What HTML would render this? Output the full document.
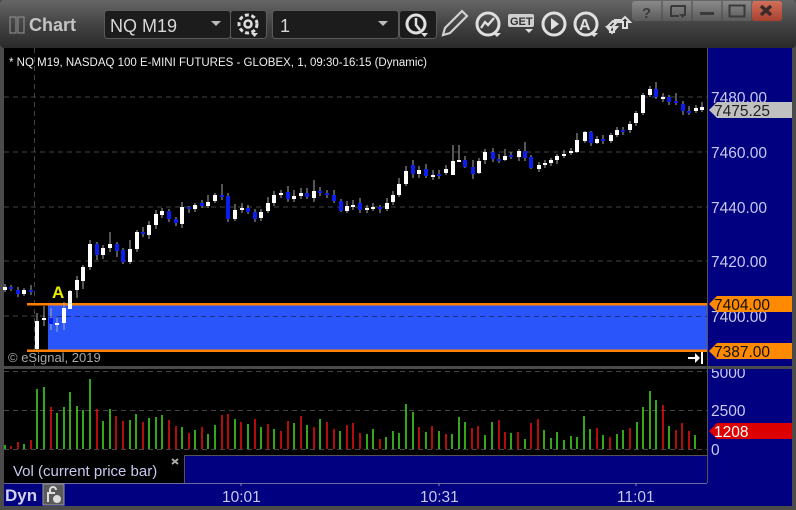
<!DOCTYPE html>
<html><head><meta charset="utf-8"><style>
html,body{margin:0;padding:0;background:#4a4a4a;}
body{width:796px;height:510px;overflow:hidden;position:relative;font-family:"Liberation Sans",sans-serif;}
</style></head><body>
<svg width="796" height="510" viewBox="0 0 796 510" xmlns="http://www.w3.org/2000/svg" style="position:absolute;left:0;top:0" font-family="Liberation Sans, sans-serif">
<defs>
<linearGradient id="tb" x1="0" y1="0" x2="0" y2="1"><stop offset="0" stop-color="#666"/><stop offset="0.55" stop-color="#404040"/><stop offset="1" stop-color="#2a2a2a"/></linearGradient>
<linearGradient id="wb" x1="0" y1="0" x2="0" y2="1"><stop offset="0" stop-color="#8a8a8a"/><stop offset="1" stop-color="#5a5a5a"/></linearGradient>
<linearGradient id="xb" x1="0" y1="0" x2="0" y2="1"><stop offset="0" stop-color="#d2705a"/><stop offset="1" stop-color="#a8402e"/></linearGradient>
<clipPath id="ax"><rect x="707" y="369" width="85" height="90"/></clipPath>
</defs>
<rect x="0" y="0" width="796" height="510" fill="#4b4b4b"/>
<rect x="0" y="0" width="796" height="48" fill="url(#tb)" rx="4"/>
<rect x="10" y="17" width="6" height="16" fill="none" stroke="#888" stroke-width="1.2"/>
<rect x="18" y="17" width="6" height="16" fill="none" stroke="#888" stroke-width="1.2"/>
<text x="29" y="31" font-size="18" font-weight="bold" fill="#c4c4c4">Chart</text>
<rect x="104.5" y="10.5" width="126" height="28" rx="3" fill="#1c1c1c" stroke="#5a5a5a"/>
<text x="110" y="32" font-size="18" fill="#d8d8d8">NQ M19</text>
<path d="M211 21h10l-5 5z" fill="#bbb"/>
<rect x="230.5" y="10.5" width="36" height="28" rx="3" fill="#1c1c1c" stroke="#5a5a5a"/>
<circle cx="248" cy="24" r="9" fill="none" stroke="#ddd" stroke-width="3" stroke-dasharray="4 2.5"/>
<circle cx="248" cy="24" r="3.5" fill="none" stroke="#ddd" stroke-width="2.5"/>
<path d="M251 33h7l-3.5 4z" fill="#ddd"/>
<rect x="272.5" y="10.5" width="126" height="28" rx="3" fill="#1c1c1c" stroke="#5a5a5a"/>
<text x="280" y="32" font-size="18" fill="#d8d8d8">1</text>
<path d="M378 21h10l-5 5z" fill="#bbb"/>
<rect x="399.5" y="10.5" width="37" height="28" rx="3" fill="#1c1c1c" stroke="#5a5a5a"/>
<circle cx="416" cy="24" r="9" fill="none" stroke="#e0e0e0" stroke-width="3"/>
<path d="M416 18v7l4 5" fill="none" stroke="#e0e0e0" stroke-width="2.5"/>
<path d="M421 33h7l-3.5 4z" fill="#e0e0e0"/>
<path d="M443 35l2-7 17-17 5 5-17 17z" fill="none" stroke="#d0d0d0" stroke-width="2.2"/>
<circle cx="488" cy="24" r="11" fill="none" stroke="#dedede" stroke-width="3"/>
<path d="M481 28l4-6 3 3 6-7" fill="none" stroke="#dedede" stroke-width="2.3"/>
<path d="M493 33h8l-4 4z" fill="#dedede"/>
<rect x="508" y="14" width="26" height="13" rx="2" fill="#cfcfcf"/>
<text x="510" y="25" font-size="11" font-weight="bold" fill="#333">GET</text>
<path d="M525 29h8l-4 4z" fill="#dedede"/>
<circle cx="554" cy="24" r="11" fill="none" stroke="#e0e0e0" stroke-width="3"/>
<path d="M551 18v12l8-6z" fill="#e0e0e0"/>
<circle cx="586" cy="24" r="11" fill="none" stroke="#e0e0e0" stroke-width="3"/>
<text x="579" y="30" font-size="16" font-weight="bold" fill="#e0e0e0">A</text>
<path d="M590 33h8l-4 4z" fill="#e0e0e0"/>
<path d="M608 26l5-5 2 2v-3h4l-8 8zM620 22l5-5 5 5h-3v6h-4v-6z" fill="#333" stroke="#ddd" stroke-width="2"/>
<path d="M607 27h3v5h4v-5h3l-5 6z" fill="#333" stroke="#ddd" stroke-width="2"/>
<rect x="632" y="1" width="150" height="20" rx="3" fill="url(#wb)"/>
<path d="M662 1v20M692 1v20M722 1v20M752 1v20" stroke="#4a4a4a"/>
<rect x="752" y="1" width="30" height="20" rx="3" fill="url(#xb)"/>
<text x="642" y="18" font-size="15" font-weight="bold" fill="#3a3a3a">?</text>
<path d="M671 6h14v10M671 6v10h8" fill="none" stroke="#3a3a3a" stroke-width="2"/>
<path d="M679 14h7l-3.5 4z" fill="#3a3a3a"/>
<rect x="700" y="12" width="14" height="3" fill="#3a3a3a"/>
<rect x="729.5" y="5.5" width="15" height="11" fill="none" stroke="#3a3a3a" stroke-width="2"/>
<path d="M761 6l10 9M771 6l-10 9" stroke="#3a2a2a" stroke-width="3.5"/>
<rect x="4" y="48" width="703" height="318" fill="#000"/>
<rect x="707" y="48" width="85" height="458" fill="#000080"/>
<line x1="707.5" y1="48" x2="707.5" y2="483" stroke="#555"/>
<text x="9" y="66" font-size="11.5" fill="#f0f0f0">* NQ M19, NASDAQ 100 E-MINI FUTURES - GLOBEX, 1, 09:30-16:15 (Dynamic)</text>
<g stroke="#444" stroke-dasharray="5 4">
<line x1="4" y1="97" x2="707" y2="97"/><line x1="4" y1="152" x2="707" y2="152"/><line x1="4" y1="207" x2="707" y2="207"/><line x1="4" y1="261" x2="707" y2="261"/><line x1="4" y1="316" x2="707" y2="316"/>
<line x1="34.5" y1="48" x2="34.5" y2="455"/>
</g>
<rect x="48" y="305" width="659" height="45" fill="#2a55fb"/>
<line x1="48" y1="316.5" x2="707" y2="316.5" stroke="#1a2f8a" stroke-dasharray="5 4"/>
<rect x="27" y="303" width="680" height="2.5" fill="#ff8000"/>
<rect x="27" y="349.5" width="680" height="2.5" fill="#ff8000"/>
<text x="52" y="298" font-size="17" font-weight="bold" fill="#e8e800">A</text>
<g stroke="#aaa" stroke-width="1">
<path d="M5 284v8M11 285v6M18 287v10M24 288v8M31 285v10M37 313v38M44 306v20M51 308v22M57 318v14M64 302v28M70 290v12M77 276v22M83 265v24M90 240v30M97 242v18M103 245v14M110 232v20M117 242v15M123 248v16M130 240v24M137 230v22M143 227v10M149 221v18M156 210v19M162 208v10M169 209v13M176 217v9M182 202v26M189 206v7M195 203v9M202 200v8M208 195v13M215 193v10M222 184v16M228 193v29M235 204v17M242 203v10M248 205v9M255 209v13M261 209v12M268 197v16M274 191v15M281 190v8M288 186v16M294 190v12M301 188v11M307 188v11M314 180v22M320 187v9M327 190v8M334 190v13M341 199v13M347 201v12"/>
<path d="M353 200v10M360 198v15M367 205v8M373 203v8M380 205v8M387 198v13M393 191v14M399 178v19M406 166v20M413 160v18M419 166v12M426 164v14M433 170v10M439 170v9M446 165v10M453 145v20M459 145v17M465 156v12M473 160v19M479 158v16M485 149v15M493 148v14M499 154v9M505 149v12M511 152v7M519 149v12M525 142v19M531 155v14M539 162v10M545 160v8M551 158v8M557 154v10M564 150v8M571 148v7M577 133v20M585 131v12M591 131v15M597 136v8M603 135v9M611 133v10M617 127v10M623 127v8M630 121v12M636 111v15M643 93v22M650 86v11M656 82v17M663 93v9M669 95v10M676 93v12M683 101v14M689 106v9M696 105v8M702 102v10"/>
</g>
<g fill="#fff">
<rect x="3" y="287" width="4" height="3"/><rect x="22" y="290" width="4" height="4"/><rect x="35" y="321" width="4" height="28"/><rect x="42" y="318" width="4" height="2"/><rect x="55" y="323" width="4" height="2"/><rect x="62" y="308" width="4" height="15"/><rect x="68" y="291" width="4" height="18"/><rect x="75" y="280" width="4" height="10"/><rect x="81" y="267" width="4" height="14"/><rect x="88" y="244" width="4" height="23"/><rect x="101" y="248" width="4" height="7"/><rect x="108" y="244" width="4" height="4"/><rect x="128" y="249" width="4" height="13"/><rect x="135" y="232" width="4" height="17"/><rect x="147" y="225" width="4" height="10"/><rect x="154" y="214" width="4" height="11"/><rect x="160" y="211" width="4" height="4"/><rect x="180" y="207" width="4" height="17"/><rect x="193" y="205" width="4" height="4"/><rect x="206" y="202" width="4" height="4"/><rect x="213" y="195" width="4" height="6"/><rect x="233" y="210" width="4" height="9"/><rect x="240" y="208" width="4" height="2"/><rect x="259" y="212" width="4" height="6"/><rect x="266" y="203" width="4" height="8"/><rect x="272" y="195" width="4" height="8"/><rect x="279" y="193" width="4" height="2"/><rect x="292" y="196" width="4" height="3"/><rect x="299" y="193" width="4" height="3"/><rect x="312" y="191" width="4" height="7"/><rect x="345" y="206" width="4" height="5"/>
<rect x="351" y="205" width="4" height="2"/><rect x="365" y="208" width="4" height="2"/><rect x="371" y="207" width="4" height="2"/><rect x="385" y="203" width="4" height="6"/><rect x="391" y="195" width="4" height="7"/><rect x="397" y="184" width="4" height="11"/><rect x="404" y="171" width="4" height="13"/><rect x="417" y="170" width="4" height="4"/><rect x="431" y="175" width="4" height="2"/><rect x="444" y="169" width="4" height="4"/><rect x="451" y="161" width="4" height="14"/><rect x="457" y="160" width="4" height="2"/><rect x="477" y="161" width="4" height="12"/><rect x="483" y="152" width="4" height="8"/><rect x="503" y="156" width="4" height="4"/><rect x="517" y="151" width="4" height="6"/><rect x="537" y="165" width="4" height="4"/><rect x="543" y="163" width="4" height="2"/><rect x="549" y="160" width="4" height="3"/><rect x="555" y="156" width="4" height="4"/><rect x="562" y="154" width="4" height="2"/><rect x="569" y="151" width="4" height="2"/><rect x="575" y="140" width="4" height="12"/><rect x="583" y="132" width="4" height="9"/><rect x="595" y="139" width="4" height="4"/><rect x="609" y="135" width="4" height="6"/><rect x="615" y="130" width="4" height="5"/><rect x="628" y="124" width="4" height="6"/><rect x="634" y="113" width="4" height="10"/><rect x="641" y="95" width="4" height="18"/><rect x="648" y="89" width="4" height="6"/><rect x="661" y="97" width="4" height="2"/><rect x="694" y="108" width="4" height="3"/><rect x="700" y="107" width="4" height="3"/>
</g>
<g fill="#0a1ef0">
<rect x="9" y="287" width="4" height="2"/><rect x="16" y="290" width="4" height="4"/><rect x="29" y="290" width="4" height="2"/><rect x="49" y="318" width="4" height="6"/><rect x="95" y="244" width="4" height="11"/><rect x="115" y="244" width="4" height="7"/><rect x="121" y="250" width="4" height="12"/><rect x="141" y="232" width="4" height="2"/><rect x="167" y="211" width="4" height="8"/><rect x="174" y="219" width="4" height="4"/><rect x="187" y="207" width="4" height="2"/><rect x="200" y="203" width="4" height="3"/><rect x="220" y="195" width="4" height="2"/><rect x="226" y="196" width="4" height="23"/><rect x="246" y="208" width="4" height="4"/><rect x="253" y="212" width="4" height="7"/><rect x="286" y="192" width="4" height="7"/><rect x="305" y="193" width="4" height="4"/><rect x="318" y="191" width="4" height="2"/><rect x="325" y="193" width="4" height="2"/><rect x="332" y="195" width="4" height="6"/><rect x="339" y="201" width="4" height="10"/>
<rect x="358" y="203" width="4" height="7"/><rect x="378" y="207" width="4" height="2"/><rect x="411" y="165" width="4" height="9"/><rect x="424" y="169" width="4" height="7"/><rect x="437" y="174" width="4" height="2"/><rect x="463" y="160" width="4" height="7"/><rect x="471" y="167" width="4" height="7"/><rect x="491" y="152" width="4" height="7"/><rect x="497" y="159" width="4" height="2"/><rect x="509" y="155" width="4" height="2"/><rect x="523" y="151" width="4" height="7"/><rect x="529" y="157" width="4" height="11"/><rect x="589" y="132" width="4" height="11"/><rect x="601" y="139" width="4" height="2"/><rect x="621" y="130" width="4" height="2"/><rect x="654" y="89" width="4" height="8"/><rect x="667" y="97" width="4" height="5"/><rect x="674" y="101" width="4" height="2"/><rect x="681" y="104" width="4" height="7"/><rect x="687" y="111" width="4" height="2"/>
</g>
<text x="8" y="362" font-size="13" fill="#a8a8a8">© eSignal, 2019</text>
<path d="M688 357h7v-4l5 5-5 5v-4h-7z" fill="#fff"/><rect x="701" y="352" width="2" height="12" fill="#fff"/>
<g font-size="15.5" fill="#c8c8f0">
<text x="711" y="103">7480.00</text><text x="711" y="158">7460.00</text><text x="711" y="213">7440.00</text><text x="711" y="267">7420.00</text><text x="711" y="322">7400.00</text>
</g>
<path d="M717 102h75v16h-75l-8-8z" fill="#c0c0c0"/>
<text x="714" y="116" font-size="15.5" fill="#222">7475.25</text>
<path d="M717 296h75v16h-75l-8-8z" fill="#ff8a00"/>
<text x="714" y="310" font-size="15.5" fill="#111">7404.00</text>
<path d="M717 343h75v16h-75l-8-8z" fill="#ff8a00"/>
<text x="714" y="357" font-size="15.5" fill="#111">7387.00</text>
<rect x="4" y="366" width="788" height="3" fill="#4a4a4a"/>
<rect x="4" y="369" width="703" height="86" fill="#000"/>
<line x1="4" y1="371.5" x2="707" y2="371.5" stroke="#444" stroke-dasharray="5 4"/>
<line x1="4" y1="410.5" x2="707" y2="410.5" stroke="#444" stroke-dasharray="5 4"/>
<line x1="4" y1="449.5" x2="707" y2="449.5" stroke="#444" stroke-dasharray="5 4"/>
<g stroke-width="1.5">
<path stroke="#44dd22" d="M5 449v-4M24 449v-5M37 449v-60M44 449v-62M57 449v-36M64 449v-42M70 449v-57M77 449v-43M83 449v-39M90 449v-70M103 449v-28M110 449v-40M130 449v-29M136 449v-35M149 449v-31M156 449v-32M162 449v-34M182 449v-22M195 449v-19M208 449v-15M215 449v-24M235 449v-30M248 449v-25M261 449v-22M274 449v-20M294 449v-26M307 449v-24M320 449v-30M340 449v-18M367 449v-15M373 449v-20M386 449v-12M393 449v-18M399 449v-16M406 449v-45M413 449v-37M426 449v-17M439 449v-18M452 449v-15M459 449v-32M465 449v-27M485 449v-14M492 449v-27M511 449v-16M525 449v-10M544 449v-19M551 449v-11M557 449v-17M564 449v-9M571 449v-13M577 449v-12M584 449v-33M590 449v-20M603 449v-14M617 449v-15M623 449v-19M637 449v-27M643 449v-42M650 449v-58M656 449v-49M669 449v-23M695 449v-14"/>
<path stroke="#ee1111" d="M11 449v-3M18 449v-7M31 449v-9M51 449v-42M97 449v-40M116 449v-33M123 449v-28M143 449v-27M169 449v-29M176 449v-23M189 449v-16M202 449v-22M222 449v-34M228 449v-35M241 449v-27M255 449v-30M268 449v-25M281 449v-18M288 449v-28M301 449v-33M314 449v-22M327 449v-27M334 449v-20M347 449v-24M353 449v-26M360 449v-16M380 449v-10M419 449v-22M432 449v-23M446 449v-15M472 449v-21M478 449v-23M499 449v-29M505 449v-17M518 449v-17M531 449v-26M538 449v-30M597 449v-21M610 449v-12M630 449v-21M663 449v-44M676 449v-19M682 449v-26M689 449v-18"/>
</g>
<g font-size="15.5" fill="#c8c8f0" clip-path="url(#ax)">
<text x="711" y="378">5000</text><text x="711" y="416">2500</text><text x="711" y="455">0</text>
</g>
<path d="M717 423h75v16h-75l-8-8z" fill="#dd0000"/>
<text x="714" y="437" font-size="15.5" fill="#fff">1208</text>
<rect x="4" y="455" width="180" height="28" fill="#000"/>
<text x="13" y="476" font-size="15" fill="#c8c8f0">Vol (current price bar)</text>
<path d="M172 459l6 5M178 459l-6 5" stroke="#aaa" stroke-width="2"/>
<rect x="184" y="455" width="523" height="28" fill="#000080"/>
<line x1="184.5" y1="455" x2="184.5" y2="483" stroke="#555"/>
<line x1="184" y1="455.5" x2="707" y2="455.5" stroke="#555"/>
<rect x="4" y="483" width="703" height="23" fill="#000080"/>
<line x1="4" y1="483.5" x2="707" y2="483.5" stroke="#6a6aa0"/>
<text x="5" y="501" font-size="17" font-weight="bold" fill="#d0d0e8">Dyn</text>
<rect x="43" y="484" width="21" height="21" fill="#5a5a5a" stroke="#999"/>
<path d="M48 502v-9h7M50 493v-3a3 3 0 0 1 6 0" fill="none" stroke="#ddd" stroke-width="2"/>
<circle cx="57" cy="499" r="4" fill="#ddd"/>
<g font-size="15.5" fill="#c8c8f0">
<text x="222" y="502">10:01</text><text x="420" y="502">10:31</text><text x="617" y="502">11:01</text>
</g>
<path d="M241 483v3M439 483v3M636 483v3" stroke="#8888b0"/>
</svg>
</body></html>
